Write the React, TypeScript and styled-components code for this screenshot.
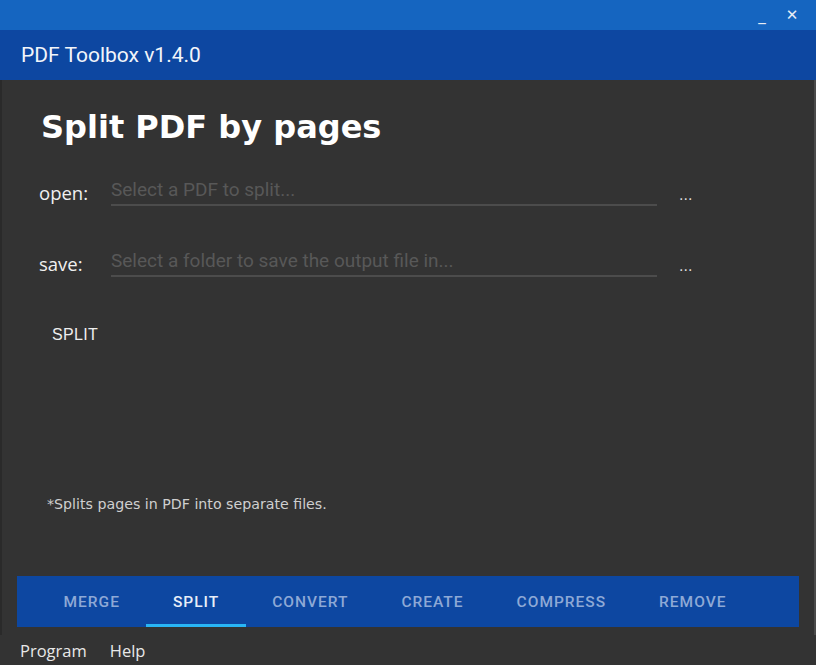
import React from "react";
import styled, { createGlobalStyle } from "styled-components";

const Global = createGlobalStyle`
  html, body { margin: 0; padding: 0; background: #333333; }
  body { width: 816px; height: 665px; overflow: hidden; }
`;

const Window = styled.div`
  width: 816px;
  height: 665px;
  display: flex;
  flex-direction: column;
  background: #333333;
`;

const TitleBar = styled.div`
  height: 30px;
  background: #1565c0;
  display: flex;
  align-items: center;
  justify-content: flex-end;
  padding-right: 16px;
  gap: 14px;
  box-sizing: border-box;
`;

const WinButton = styled.span`
  color: #e6ecf5;
  font-family: "DejaVu Sans", sans-serif;
  font-size: 15px;
  width: 16px;
  text-align: center;
  line-height: 30px;
`;

const Header = styled.div`
  height: 50px;
  background: #0d47a1;
  display: flex;
  align-items: center;
  padding-left: 21px;
  color: #f2f5fa;
  font-family: Roboto, sans-serif;
  font-size: 21px;
`;

const Panel = styled.div`
  height: 555px;
  box-sizing: border-box;
  border-left: 2px solid #2a2a2a;
  border-right: 2px solid #4a4a4a;
  display: flex;
  flex-direction: column;
  padding: 27px 16px 8px 15px;
`;

const Title = styled.h1`
  margin: 0 0 0 24px;
  font-family: "DejaVu Sans", Verdana, sans-serif;
  font-weight: bold;
  font-size: 32px;
  color: #ffffff;
  line-height: 40px;
`;

const Row = styled.div<{ $top: number }>`
  display: flex;
  align-items: flex-end;
  margin-top: ${(p) => p.$top}px;
  height: 34px;
`;

const Label = styled.div`
  width: 72px;
  padding-left: 22px;
  font-family: "Open Sans", sans-serif;
  font-size: 18.5px;
  color: #f0f0f0;
  line-height: 26px;
`;

const Field = styled.div`
  width: 546px;
  border-bottom: 2px solid #4c4c4c;
  font-family: Roboto, sans-serif;
  font-size: 19px;
  color: #585858;
  line-height: 28px;
  height: 28px;
  padding-top: 3px;
  padding-bottom: 0;
  box-sizing: content-box;
`;

const Dots = styled.div`
  margin-left: 22px;
  margin-bottom: -3px;
  font-family: "DejaVu Sans", sans-serif;
  font-size: 14px;
  color: #e0e0e0;
  line-height: 20px;
`;

const ActionButton = styled.div`
  margin-top: 48px;
  margin-left: 35px;
  font-family: "Liberation Sans", Arial, sans-serif;
  font-size: 16px;
  letter-spacing: 0.3px;
  color: #eeeeee;
  line-height: 20px;
`;

const Note = styled.div`
  margin-top: auto;
  margin-left: 30px;
  margin-bottom: 64px;
  font-family: "DejaVu Sans", Verdana, sans-serif;
  font-size: 14.2px;
  color: #cfcfcf;
`;

const Tabs = styled.div`
  height: 51px;
  width: 782px;
  background: #0d47a1;
  display: flex;
  padding-left: 20px;
  box-sizing: border-box;
`;

const Tab = styled.div<{ $active?: boolean }>`
  padding: 3px 26.5px 0;
  display: flex;
  align-items: center;
  font-family: Roboto, sans-serif;
  font-weight: 500;
  font-size: 15.5px;
  letter-spacing: 1px;
  color: ${(p) => (p.$active ? "#e8eef8" : "#8ea9d6")};
  border-bottom: 3px solid ${(p) => (p.$active ? "#29b6f6" : "transparent")};
`;

const MenuBar = styled.div`
  height: 30px;
  display: flex;
  align-items: center;
  gap: 23px;
  padding-left: 20px;
  font-family: "Open Sans", sans-serif;
  font-size: 16.5px;
  color: #e8e8e8;
`;

const tabs = ["MERGE", "SPLIT", "CONVERT", "CREATE", "COMPRESS", "REMOVE"];

export default function App() {
  return (
    <Window>
      <Global />
      <TitleBar>
        <WinButton>_</WinButton>
        <WinButton>✕</WinButton>
      </TitleBar>
      <Header>PDF Toolbox v1.4.0</Header>
      <Panel>
        <Title>Split PDF by pages</Title>
        <Row $top={25}>
          <Label>open:</Label>
          <Field>Select a PDF to split...</Field>
          <Dots>···</Dots>
        </Row>
        <Row $top={37}>
          <Label>save:</Label>
          <Field>Select a folder to save the output file in...</Field>
          <Dots>···</Dots>
        </Row>
        <ActionButton>SPLIT</ActionButton>
        <Note>*Splits pages in PDF into separate files.</Note>
        <Tabs>
          {tabs.map((t) => (
            <Tab key={t} $active={t === "SPLIT"}>
              {t}
            </Tab>
          ))}
        </Tabs>
      </Panel>
      <MenuBar>
        <span>Program</span>
        <span>Help</span>
      </MenuBar>
    </Window>
  );
}
